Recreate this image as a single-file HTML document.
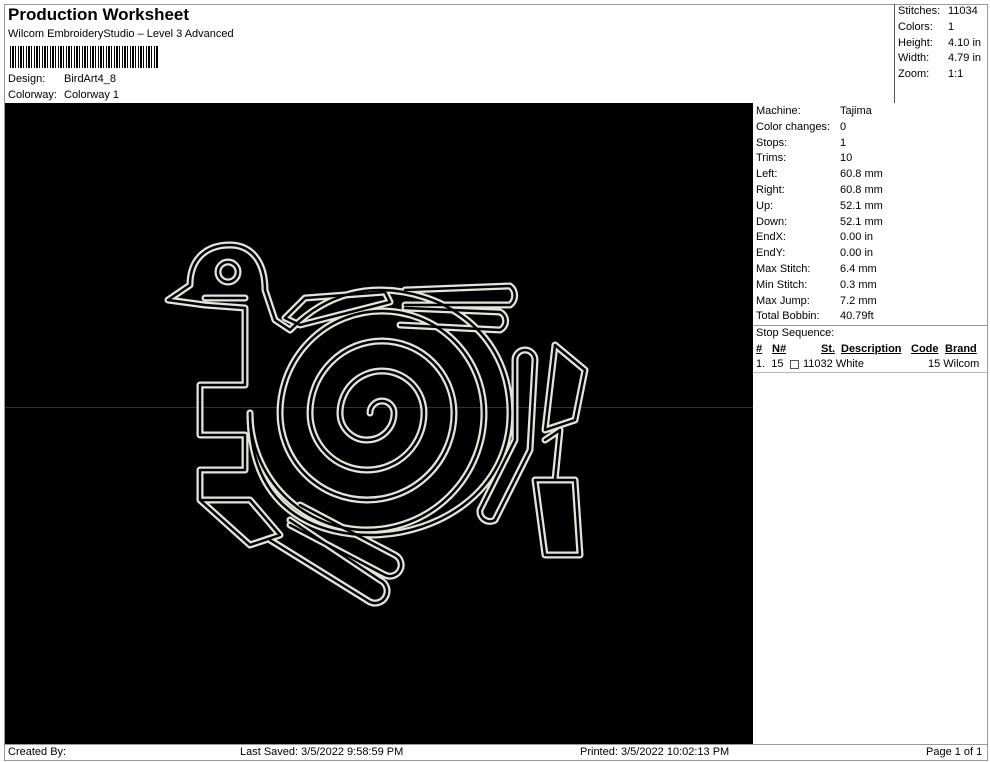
<!DOCTYPE html>
<html><head><meta charset="utf-8"><style>
*{margin:0;padding:0;box-sizing:border-box}
body{width:990px;height:762px;background:#fff;font-family:"Liberation Sans",Arial,sans-serif;color:#000;position:relative;overflow:hidden}
.a{position:absolute}
.t{font-size:11px;line-height:15.8px;white-space:nowrap}
</style></head><body>
<div class="a" style="left:4px;top:4px;width:984px;height:757px;border:1px solid #999"></div>
<div class="a" style="left:8px;top:5px;font-size:17px;font-weight:bold">Production Worksheet</div>
<div class="a t" style="left:8px;top:27px">Wilcom EmbroideryStudio – Level 3 Advanced</div>
<div class="a" style="left:10px;top:46px;width:148px;height:22px;background:repeating-linear-gradient(90deg,#000 0 1px,#fff 1px 2px,#000 2px 4px,#fff 4px 5px,#000 5px 6px,#fff 6px 8px)"></div>
<div class="a t" style="left:8px;top:72px">Design:</div><div class="a t" style="left:64px;top:72px">BirdArt4_8</div>
<div class="a t" style="left:8px;top:88px">Colorway:</div><div class="a t" style="left:64px;top:88px">Colorway 1</div>
<div class="a" style="left:894px;top:4px;width:1px;height:99px;background:#555"></div>
<div class="a t" style="left:898px;top:4px;line-height:15.8px">Stitches:<br>Colors:<br>Height:<br>Width:<br>Zoom:</div>
<div class="a t" style="left:948px;top:4px;line-height:15.8px">11034<br>1<br>4.10 in<br>4.79 in<br>1:1</div>
<div class="a" style="left:5px;top:103px;width:748px;height:641px;background:#000"></div>
<div class="a" style="left:5px;top:407px;width:748px;height:1px;background:#333"></div>
<div class="a t" style="left:756px;top:104px">Machine:<br>Color changes:<br>Stops:<br>Trims:<br>Left:<br>Right:<br>Up:<br>Down:<br>EndX:<br>EndY:<br>Max Stitch:<br>Min Stitch:<br>Max Jump:<br>Total Bobbin:</div>
<div class="a t" style="left:840px;top:104px">Tajima<br>0<br>1<br>10<br>60.8 mm<br>60.8 mm<br>52.1 mm<br>52.1 mm<br>0.00 in<br>0.00 in<br>6.4 mm<br>0.3 mm<br>7.2 mm<br>40.79ft</div>
<div class="a" style="left:753px;top:325px;width:234px;height:1px;background:#999"></div>
<div class="a t" style="left:756px;top:326px">Stop Sequence:</div>
<div class="a t" style="left:756px;top:342px;font-weight:bold;text-decoration:underline">#</div>
<div class="a t" style="left:772px;top:342px;font-weight:bold;text-decoration:underline">N#</div>
<div class="a t" style="left:821px;top:342px;font-weight:bold;text-decoration:underline">St.</div>
<div class="a t" style="left:841px;top:342px;font-weight:bold;text-decoration:underline">Description</div>
<div class="a t" style="left:911px;top:342px;font-weight:bold;text-decoration:underline">Code</div>
<div class="a t" style="left:945px;top:342px;font-weight:bold;text-decoration:underline">Brand</div>
<div class="a t" style="left:756px;top:357px">1.&nbsp; 15</div>
<div class="a" style="left:790px;top:360px;width:9px;height:9px;border:1px solid #555"></div>
<div class="a t" style="left:803px;top:357px">11032 White</div>
<div class="a t" style="left:928px;top:357px">15 Wilcom</div>
<div class="a" style="left:753px;top:372px;width:234px;height:1px;background:#bbb"></div>
<div class="a" style="left:5px;top:744px;width:982px;height:1px;background:#999"></div>
<div class="a t" style="left:8px;top:745px">Created By:</div>
<div class="a t" style="left:240px;top:745px">Last Saved: 3/5/2022 9:58:59 PM</div>
<div class="a t" style="left:580px;top:745px">Printed: 3/5/2022 10:02:13 PM</div>
<div class="a t" style="left:926px;top:745px">Page 1 of 1</div>
<svg class="a" style="left:0;top:0" width="990" height="762" fill="none" stroke-linejoin="round" stroke-linecap="round">
<defs><g id="art">
<path d="M370,413 A12,12 0 0 1 394,413 A27,27 0 0 1 340,413 A42,42 0 0 1 424,413 A57,57 0 0 1 310,413 A72,72 0 0 1 454,413 A87,87 0 0 1 280,413 A102,102 0 0 1 484,413 A117,117 0 0 1 250,413"/>
<path d="M250,413 C250,520 330,535 370,535 C440,535 510,490 510,413 C510,330 440,290 380,290 C330,290 300,320 290,330 L275,320 L265,290 C265,260 250,245 230,245 C205,245 190,260 190,285 L168,300 L205,305 L245,308 L245,385 L200,385 L200,435 L245,435 L245,470 L200,470 L200,500 L250,500 L280,535 L250,545 L200,500"/>
<path d="M285,318 L305,298 L385,292 L390,302 L300,325 Z M405,290 L510,286 A12,12 0 0 1 510,305 L405,305 M405,308 L500,312 A10,10 0 0 1 500,330 L400,325"/>
<path d="M290,520 L380,580 A12,12 0 0 1 370,602 L270,540 M300,505 L395,555 A10,10 0 0 1 385,575 L290,525"/>
<path d="M515,360 A10,10 0 0 1 535,360 L530,450 L495,520 A10,10 0 0 1 480,510 L515,440 Z"/>
<path d="M555,345 L585,370 L575,420 L545,430 Z M545,440 L560,430 L555,480 M535,480 L575,480 L580,555 L545,555 Z"/>
<circle cx="228" cy="272" r="10"/><path d="M205,298 L245,298"/>
</g></defs>
<use href="#art" stroke="#e4e4dc" stroke-width="7"/>
<use href="#art" stroke="#000" stroke-width="2.5"/>
</svg>
</body></html>
